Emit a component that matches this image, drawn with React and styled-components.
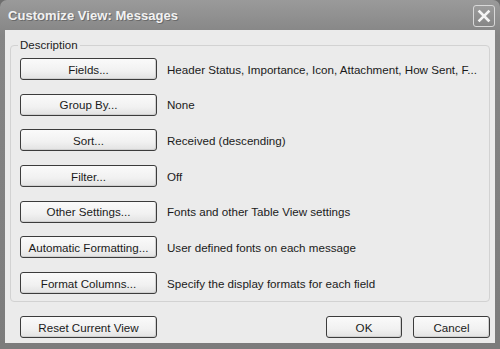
import React from "react";
import styled, { createGlobalStyle } from "styled-components";

const GlobalStyle = createGlobalStyle`
  html, body {
    margin: 0;
    padding: 0;
    background: #6e6e6e;
  }
  * {
    box-sizing: border-box;
  }
`;

const Frame = styled.div`
  width: 500px;
  height: 349px;
  display: flex;
  flex-direction: column;
  background: linear-gradient(180deg, #9a9a9a 0%, #858585 10%, #7c7c7c 100%);
  border-radius: 7px 7px 0 0;
  font-family: "Liberation Sans", Arial, sans-serif;
`;

const TitleBar = styled.div`
  height: 30px;
  flex: none;
  display: flex;
  align-items: center;
  justify-content: space-between;
  padding: 0 5px 0 8px;
`;

const Title = styled.span`
  color: #f2f2f2;
  font-family: "Liberation Sans", Arial, sans-serif;
  font-weight: bold;
  font-size: 13px;
  letter-spacing: 0.05px;
  text-shadow: 1px 1px 0 #6a6a6a;
`;

const CloseBox = styled.div`
  width: 22px;
  height: 22px;
  margin-top: 1px;
  border: 1px solid #d8d8d8;
  border-radius: 3px;
  background: linear-gradient(180deg, #9c9c9c 0%, #868686 100%);
  display: flex;
  align-items: center;
  justify-content: center;
`;

const Body = styled.div`
  flex: 1;
  margin: 0 5px 6px 5px;
  background: #ebebeb;
  padding: 9px 5px 5px 5px;
  display: flex;
  flex-direction: column;
`;

const Group = styled.fieldset`
  margin: 0;
  padding: 7px 9px 7px 9px;
  border: 1px solid #d2d2d2;
  border-radius: 4px;
  display: flex;
  flex-direction: column;
  gap: 13.7px;
`;

const Legend = styled.legend`
  padding: 0 2px;
  margin-left: -2px;
  font-size: 11.5px;
  color: #222;
`;

const Row = styled.div`
  display: flex;
  align-items: center;
  gap: 10px;
`;

const Button = styled.button`
  width: ${(p) => p.w || 137}px;
  height: 22px;
  flex: none;
  padding: 0;
  border: 1px solid #3c3c3c;
  border-radius: 3px;
  background: linear-gradient(180deg, #fafafa 0%, #f1f1f1 60%, #e2e2e2 100%);
  box-shadow: inset -1px -1px 0 #d0d0d0;
  font-family: "Liberation Sans", Arial, sans-serif;
  font-size: 11.6px;
  color: #1a1a1a;
`;

const Info = styled.span`
  font-size: 11.6px;
  color: #1a1a1a;
  white-space: nowrap;
`;

const Footer = styled.div`
  margin-top: auto;
  display: flex;
  align-items: center;
  padding-left: 10px;
  gap: 11px;
`;

const Spacer = styled.div`
  flex: 1;
`;

const rows = [
  ["Fields...", "Header Status, Importance, Icon, Attachment, How Sent, F..."],
  ["Group By...", "None"],
  ["Sort...", "Received (descending)"],
  ["Filter...", "Off"],
  ["Other Settings...", "Fonts and other Table View settings"],
  ["Automatic Formatting...", "User defined fonts on each message"],
  ["Format Columns...", "Specify the display formats for each field"],
];

export default function App() {
  return (
    <>
      <GlobalStyle />
      <Frame>
        <TitleBar>
          <Title>Customize View: Messages</Title>
          <CloseBox>
            <svg width="14" height="14" viewBox="0 0 14 14">
              <path
                d="M2.5 2.5 L11.5 11.5 M11.5 2.5 L2.5 11.5"
                stroke="#f4f4f4"
                strokeWidth="2.6"
                strokeLinecap="square"
              />
            </svg>
          </CloseBox>
        </TitleBar>
        <Body>
          <Group>
            <Legend>Description</Legend>
            {rows.map(([label, text]) => (
              <Row key={label}>
                <Button>{label}</Button>
                <Info>{text}</Info>
              </Row>
            ))}
          </Group>
          <Footer>
            <Button>Reset Current View</Button>
            <Spacer />
            <Button w={76}>OK</Button>
            <Button w={77}>Cancel</Button>
          </Footer>
        </Body>
      </Frame>
    </>
  );
}
